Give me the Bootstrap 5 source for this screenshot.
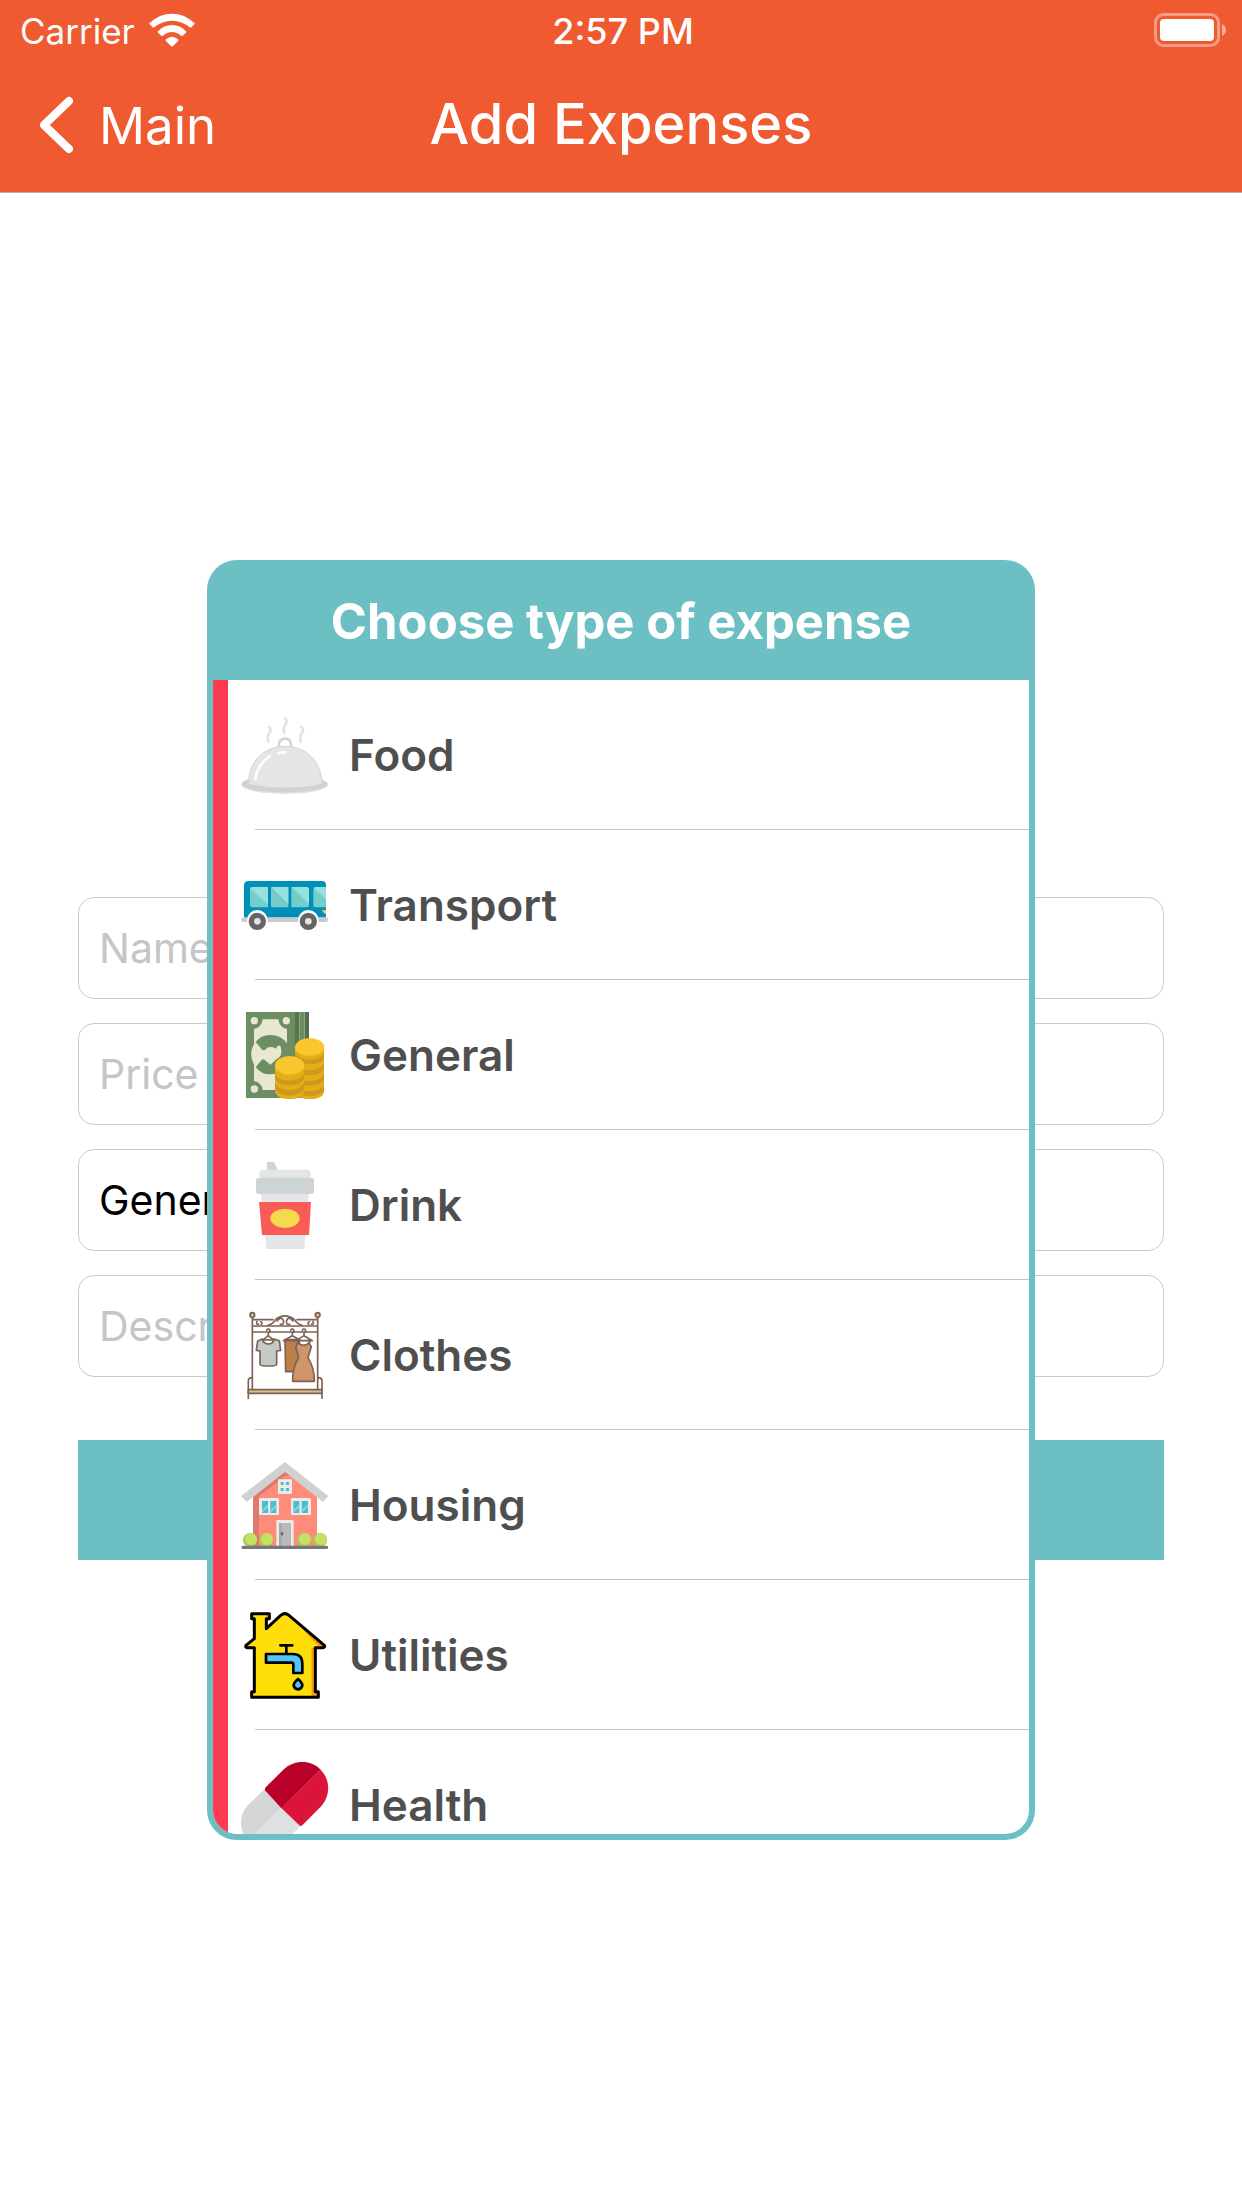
<!DOCTYPE html>
<html lang="en">
<head>
<meta charset="utf-8">
<meta name="viewport" content="width=device-width, initial-scale=1">
<title>Add Expenses</title>
<link href="https://cdn.jsdelivr.net/npm/bootstrap@5.3.0/dist/css/bootstrap.min.css" rel="stylesheet">
<style>
:root { --brand: #ef5a31; --teal: #6cbfc3; --accent: #ff3b54; }
body { font-family: Inter, "Liberation Sans", sans-serif; background: #fff; color: #000; }
svg { display: block; flex: none; }
.app-header { background: var(--brand); color: #fff; border-bottom: 1px solid #b2b0b0; }
.status-bar { height: 60px; padding: 0 16px 0 20px; font-size: 36px; line-height: 56px; }
.status-bar > *, .title-bar > * { flex: 1 1 0; }
.status-bar > .mid, .title-bar > .mid { flex: 0 0 auto; }
.status-bar span, .back-link span { padding-top: 2px; }
.carrier { font-size: 35px; gap: 14px; }
.title-bar { height: 132px; padding: 0 39px; }
.back-link { font-size: 51px; line-height: 64px; gap: 26px; }
.page-title { font-size: 56px; line-height: 72px; padding-bottom: 4px; }
.form-area { padding: 56px 78px 0; }
.expense-form { gap: 24px; }
.expense-form .form-control { height: 102px; border: 1px solid #cbcbcb; border-radius: 16px; padding: 0 20px; font-size: 41px; line-height: 60px; color: #000; background: #fff; }
.expense-form .form-control::placeholder { color: #c5c5c7; opacity: 1; }
.submit-btn { height: 120px; margin-top: 39px; background: var(--teal); }
.picker-layer { z-index: 2; padding-bottom: 1px; }
.picker { width: 66.667%; height: 1280px; max-height: 100%; border: 6px solid var(--teal); border-radius: 30px; background: var(--teal); }
.picker-title { height: 114px; font-size: 49px; line-height: 112px; }
.picker-list { border-left: 15px solid var(--accent); min-height: 0; background: #fff; }
.picker-item { flex: none; position: relative; height: 150px; padding: 0 13px; gap: 20px; font-size: 44px; line-height: 60px; color: #4f4f4f; }
.picker-item::after { content: ""; position: absolute; left: 27px; right: 0; bottom: 0; height: 1px; background: #c4c4c6; }
</style>
</head>
<body class="min-vh-100 d-flex flex-column">
<header class="app-header">
  <div class="status-bar d-flex align-items-center">
    <div class="carrier d-flex align-items-center">
      <span>Carrier</span>
      <svg width="46" height="34" viewBox="447 37 138 102" fill="#fff" aria-hidden="true">
        <path d="M449 67Q478 39 516 39T583 67Q585 69 583 71L574 80Q572 82 569 80Q546 60 516 60T463 80Q460 82 458 80L449 71Q447 69 449 67Z"/>
        <path d="M474 92Q492 73 516 73T558 92Q560 94 558 96L548 105Q546 107 543 105Q531 94 516 94T489 105Q486 107 484 105L474 96Q472 94 474 92Z"/>
        <path d="M498 116Q516 101 534 116Q537 118 534 121L519 136Q516 139 513 136L498 121Q495 118 498 116Z"/>
      </svg>
    </div>
    <span class="mid fw-medium">2:57 PM</span>
    <div class="d-flex justify-content-end">
      <svg width="73" height="34" viewBox="0 0 73 34" aria-hidden="true">
        <rect x="2.500" y="1.500" width="63" height="31" rx="8" fill="none" stroke="#fff" stroke-opacity=".4" stroke-width="3"/>
        <rect x="7" y="6" width="54" height="22" rx="4" fill="#fff"/>
        <path d="M69 11Q73 13 73 17T69 23Z" fill="#fff" fill-opacity=".5"/>
      </svg>
    </div>
  </div>
  <nav class="title-bar d-flex align-items-center" aria-label="Page">
    <div>
      <a href="#" class="back-link d-inline-flex align-items-center text-white text-decoration-none">
        <svg width="34" height="58" viewBox="0 0 34 58" fill="none" stroke="#fff" stroke-width="8" stroke-linecap="round" stroke-linejoin="round" aria-hidden="true"><path d="M30 5L5 29L30 53"/></svg>
        <span>Main</span>
      </a>
    </div>
    <h1 class="mid page-title fw-medium mb-0">Add Expenses</h1>
    <div></div>
  </nav>
</header>

<main class="form-area position-relative flex-grow-1 d-flex flex-column justify-content-center">
  <form class="expense-form d-flex flex-column">
    <input class="form-control" type="text" placeholder="Name" aria-label="Name">
    <input class="form-control" type="text" placeholder="Price" aria-label="Price">
    <input class="form-control" type="text" value="General" aria-label="Type of expense">
    <input class="form-control" type="text" placeholder="Description" aria-label="Description">
    <button type="button" class="submit-btn btn rounded-0 border-0" aria-label="Add expense"></button>
  </form>

  <div class="picker-layer position-absolute top-0 start-0 w-100 h-100 d-flex align-items-center justify-content-center">
    <section class="picker d-flex flex-column overflow-hidden" role="dialog" aria-labelledby="picker-title">
      <h2 id="picker-title" class="picker-title text-white text-center fw-bold mb-0 flex-shrink-0">Choose type of expense</h2>
      <div class="picker-list d-flex flex-column flex-grow-1 overflow-hidden">

        <button type="button" class="picker-item btn rounded-0 border-0 d-flex align-items-center fw-semibold">
          <svg width="88" height="88" viewBox="123 483 264 264" aria-hidden="true">
            <g fill="none" stroke="#e4e4e4" stroke-width="8" stroke-linecap="round"><path d="M207 531Q216 539 208 550T206 575M255 505Q264 513 256 524T254 549M304 531Q313 539 305 550T303 575"/></g>
            <path d="M237 591V582A18 16 0 0 1 273 582V591" fill="none" stroke="#cfd3d6" stroke-width="8"/>
            <ellipse cx="254" cy="704" rx="130" ry="28" fill="#e1e3e4"/>
            <ellipse cx="254" cy="702" rx="129" ry="25" fill="#cfd3d6"/>
            <path d="M146 698C145 638 190 589 255 589S366 638 365 698Q255 724 146 698Z" fill="#e5e5e5" stroke="#cfd3d6" stroke-width="3"/>
            <path d="M146 699Q255 722 365 699" fill="none" stroke="#e5e5e5" stroke-width="5"/>
            <path d="M166 686Q174 641 210 618M235 609Q246 606 255 607" fill="none" stroke="#fff" stroke-width="8" stroke-linecap="round"/>
          </svg>
          <span>Food</span>
        </button>

        <button type="button" class="picker-item btn rounded-0 border-0 d-flex align-items-center fw-semibold">
          <svg width="88" height="88" viewBox="33 3 264 264" aria-hidden="true">
            <rect x="34" y="172" width="260" height="14" rx="7" fill="#cbcbcd"/>
            <path d="M42 76Q42 63 56 63H276Q288 63 288 76V172H42Z" fill="#008fb8"/>
            <path d="M51 181A31 31 0 0 1 113 181V186H51ZM204 181A31 31 0 0 1 266 181V186H204Z" fill="#fff"/>
            <path d="M68 81H114V142H68Q60 142 60 134V89Q60 81 68 81ZM123 81H175V142H123ZM184 81H229Q237 81 237 89V134Q237 142 229 142H184ZM258 81H288V142H258Q250 142 250 134V89Q250 81 258 81Z" fill="#73cdca"/>
            <path d="M64 81H114V134L61 86ZM124 81H175V132ZM185 81H229Q237 81 237 89V132ZM256 81H288V118L252 85Z" fill="#96e1dd"/>
            <path d="M276 150H288V162Q279 161 276 150Z" fill="#ffc645"/>
            <g fill="#e4e4e4" stroke="#656565" stroke-width="16"><circle cx="82" cy="184" r="18"/><circle cx="235" cy="184" r="18"/></g>
          </svg>
          <span>Transport</span>
        </button>

        <button type="button" class="picker-item btn rounded-0 border-0 d-flex align-items-center fw-semibold">
          <svg width="88" height="88" viewBox="33 33 264 264" aria-hidden="true">
            <path d="M48 36H237V293H48Z" fill="#54704f"/><path d="M48 36H222V293H48Z" fill="#6c8e62"/><path d="M207 36H210V290H207ZM222 36H225V290H222Z" fill="#87a67c"/><path d="M195 36H207V290H195Z" fill="#58764f"/>
            <path d="M98 58H145Q148 82 171 87V243Q148 247 145 270H98Q95 247 72 243V87Q95 82 98 58Z" fill="#e9e7d2"/>
            <path d="M76 127Q93 105 121 105Q153 105 171 130V198Q153 223 121 223Q93 223 76 200Z" fill="#6c8e62"/>
            <path d="M77 126Q50 160 77 202L94 181Q99 175 104 180L121 194L139 178Q153 172 154 157Q154 136 146 136L136 146Q130 139 121 142Q113 139 105 150Q98 153 94 146Z" fill="#e9e7d2"/>
            <g fill="#e9e7d2"><circle cx="73" cy="62" r="11"/><circle cx="169" cy="62" r="11"/><circle cx="73" cy="267" r="11"/></g>
            <path d="M195 142H282V275Q279 297 238 297Q203 297 195 275Z" fill="#e4ae17"/>
            <path d="M195 158Q205 178 239 179Q272 178 282 158V174Q277 192 238 193Q202 192 195 174ZM195 190Q203 210 239 211Q272 210 282 190V206Q275 225 238 226Q203 225 195 206ZM195 223Q203 242 239 243Q272 242 282 223V239Q275 256 238 257Q203 256 195 239ZM195 255Q203 273 239 274Q272 273 282 255V270Q275 287 238 288Q203 287 195 270Z" fill="#cf991d"/>
            <ellipse cx="239" cy="141" rx="44" ry="27" fill="#fbc52d"/>
            <path d="M135 196H222V275Q216 297 178 297Q142 297 135 275Z" fill="#e4ae17"/>
            <path d="M135 214Q143 238 179 239Q214 238 222 214V236Q214 255 178 256Q143 255 135 236ZM135 247Q143 269 179 270Q214 269 222 247V267Q214 286 178 287Q143 286 135 267Z" fill="#cf991d"/>
            <path d="M135 201Q143 224 179 225Q214 224 222 201V222Q214 241 179 242Q143 241 135 222Z" fill="#e4ae17"/>
            <ellipse cx="179" cy="196" rx="44" ry="28" fill="#fbc52d"/>
          </svg>
          <span>General</span>
        </button>

        <button type="button" class="picker-item btn rounded-0 border-0 d-flex align-items-center fw-semibold">
          <svg width="88" height="88" viewBox="33 33 264 264" aria-hidden="true">
            <path d="M111 62V36H131L145 62Z" fill="#ced3d6"/>
            <path d="M93 128H237L223 297H109Z" fill="#e5e5e5"/>
            <rect x="87" y="59" width="156" height="26" rx="13" fill="#e5e5e5"/>
            <rect x="78" y="83" width="174" height="49" rx="8" fill="#ced3d6"/>
            <path d="M87 156H243L237 255H96Z" fill="#f95b57"/>
            <ellipse cx="165" cy="205" rx="44" ry="29" fill="#f7da4b"/>
          </svg>
          <span>Drink</span>
        </button>

        <button type="button" class="picker-item btn rounded-0 border-0 d-flex align-items-center fw-semibold">
          <svg width="88" height="88" viewBox="33 33 264 264" fill="none" stroke="#7d6156" stroke-width="5" stroke-linejoin="round" stroke-linecap="round" aria-hidden="true">
            <path d="M67 52V268M263 52V268M67 59H129M201 59H263M67 78H263M67 96H263"/>
            <path d="M55 295V243Q55 233 66 233M276 295V243Q276 233 264 233"/>
            <path d="M55 269H276V280H55Z" fill="#d9c08a"/>
            <circle cx="67" cy="45" r="7" fill="#d9c08a"/><circle cx="263" cy="45" r="7" fill="#d9c08a"/>
            <path d="M114 76Q130 72 137 58Q164 37 193 58Q201 72 216 76M141 63Q154 47 160 61Q164 74 151 73M189 63Q176 47 170 61Q166 74 179 73M81 64Q77 75 86 72M92 65Q99 68 94 74M249 64Q253 75 244 72M238 65Q231 68 236 74"/>
            <path d="M165 119H208V215H167Z" fill="#bb8149"/>
            <path d="M115 101V107L98 121H132L115 107M110 91Q112 85 118 88Q123 94 115 99M187 101V107L160 122H214L187 107M182 91Q184 85 190 88Q195 94 187 99M222 101V107L198 122H247L222 107M217 91Q219 85 225 88Q230 94 222 99"/>
            <path d="M97 117Q114 128 133 117L148 122L152 151L140 153V193Q139 198 115 198Q91 198 90 193V153L79 151L83 123Z" fill="#c4cac5"/><path d="M98 120Q101 131 115 132Q129 131 132 120Z" fill="#fff"/>
            <path d="M203 122Q205 133 197 140L206 173Q187 203 188 244H253Q253 202 234 173L244 140Q236 133 239 122Q237 134 221 136Q205 134 203 122Z" fill="#cf9468"/>
          </svg>
          <span>Clothes</span>
        </button>

        <button type="button" class="picker-item btn rounded-0 border-0 d-flex align-items-center fw-semibold">
          <svg width="88" height="88" viewBox="33 33 264 264" aria-hidden="true">
            <path d="M69 130L165 58L261 130V289H69Z" fill="#ff8b7b"/>
            <path d="M69 130L165 62L184 78H165L87 139V289H69Z" fill="#dd7a6c"/>
            <path d="M165 36L295 138L279 156L165 66L50 156L33 138Z" fill="#d1d1d1"/>
            <g fill="#ebebeb"><rect x="144" y="88" width="42" height="44" rx="2"/><rect x="87" y="144" width="60" height="51" rx="2"/><rect x="183" y="144" width="60" height="51" rx="2"/><rect x="139" y="210" width="52" height="79" rx="2"/></g>
            <path d="M152 96H161V105H152ZM168 96H177V105H168ZM152 114H161V123H152ZM168 114H177V123H168ZM96 153H114V189H96ZM121 153H139V189H121ZM190 153H208V189H190ZM215 153H234V189H215Z" fill="#4dbdcd"/>
            <path d="M96 180L114 163V172L96 189ZM121 180L139 163V172L121 189ZM190 180L208 163V172L190 189ZM215 180L234 163V172L215 189Z" fill="#82d4dc"/>
            <path d="M147 219H183V289H147Z" fill="#b9bab9"/><path d="M147 219H154V289H147Z" fill="#a6a7a6"/><ellipse cx="156" cy="251" rx="4" ry="6" fill="#6c6c6c"/>
            <g fill="#a9c95a"><circle cx="60" cy="270" r="21"/><circle cx="108" cy="270" r="21"/><circle cx="222" cy="270" r="21"/><circle cx="270" cy="270" r="21"/></g>
            <g fill="#c6df65"><circle cx="63" cy="267" r="18"/><circle cx="111" cy="267" r="18"/><circle cx="225" cy="267" r="18"/><circle cx="273" cy="267" r="18"/></g>
            <rect x="35" y="287" width="259" height="10" rx="4" fill="#777"/>
          </svg>
          <span>Housing</span>
        </button>

        <button type="button" class="picker-item btn rounded-0 border-0 d-flex align-items-center fw-semibold">
          <svg width="88" height="88" viewBox="33 33 264 264" stroke-linejoin="round" stroke-linecap="round" aria-hidden="true">
            <path d="M65 41H118V56H109V86L152 46Q165 36 177 46L283 136Q286 142 278 143H256V275H265V292H65V275H73V143H51Q45 142 48 136L73 116V56H65Z" fill="#ffdd09"/>
            <path d="M245 143H256V275H265V292H245ZM190 58L283 136V143H270Z" fill="#ff9811"/>
            <path d="M65 41H118V56H109V86L152 46Q165 36 177 46L283 136Q286 142 278 143H256V275H265V292H65V275H73V143H51Q45 142 48 136L73 116V56H65Z" fill="none" stroke="#000" stroke-width="9"/>
            <path d="M108 162H188Q217 162 217 191V219H190V194Q190 188 184 188H108Z" fill="#52c4f8" stroke="#000" stroke-width="8"/>
            <path d="M151 136H187M169 136V160" stroke="#000" stroke-width="8"/>
            <path d="M204 237Q190 249 191 257Q194 268 204 268T217 257Q218 249 204 237Z" fill="#52c4f8" stroke="#000" stroke-width="8"/>
          </svg>
          <span>Utilities</span>
        </button>

        <button type="button" class="picker-item btn rounded-0 border-0 d-flex align-items-center fw-semibold">
          <svg width="88" height="88" viewBox="123 63 264 264" aria-hidden="true">
            <path d="M195 147L144 195C116 224 116 270 144 303L244 203Z" fill="#d5d6d8"/>
            <path d="M244 203L144 303C176 332 223 332 253 303L303 258Z" fill="#dfe0e1"/>
            <path d="M195 151V144L250 89C282 58 333 58 362 89L244 205Z" fill="#b80029"/>
            <path d="M362 89C392 120 392 167 362 200L307 256Q303 260 298 256L244 204Z" fill="#da143a"/>
          </svg>
          <span>Health</span>
        </button>
      </div>
    </section>
  </div>
</main>
<script src="https://cdn.jsdelivr.net/npm/bootstrap@5.3.0/dist/js/bootstrap.bundle.min.js"></script>
</body>
</html>
